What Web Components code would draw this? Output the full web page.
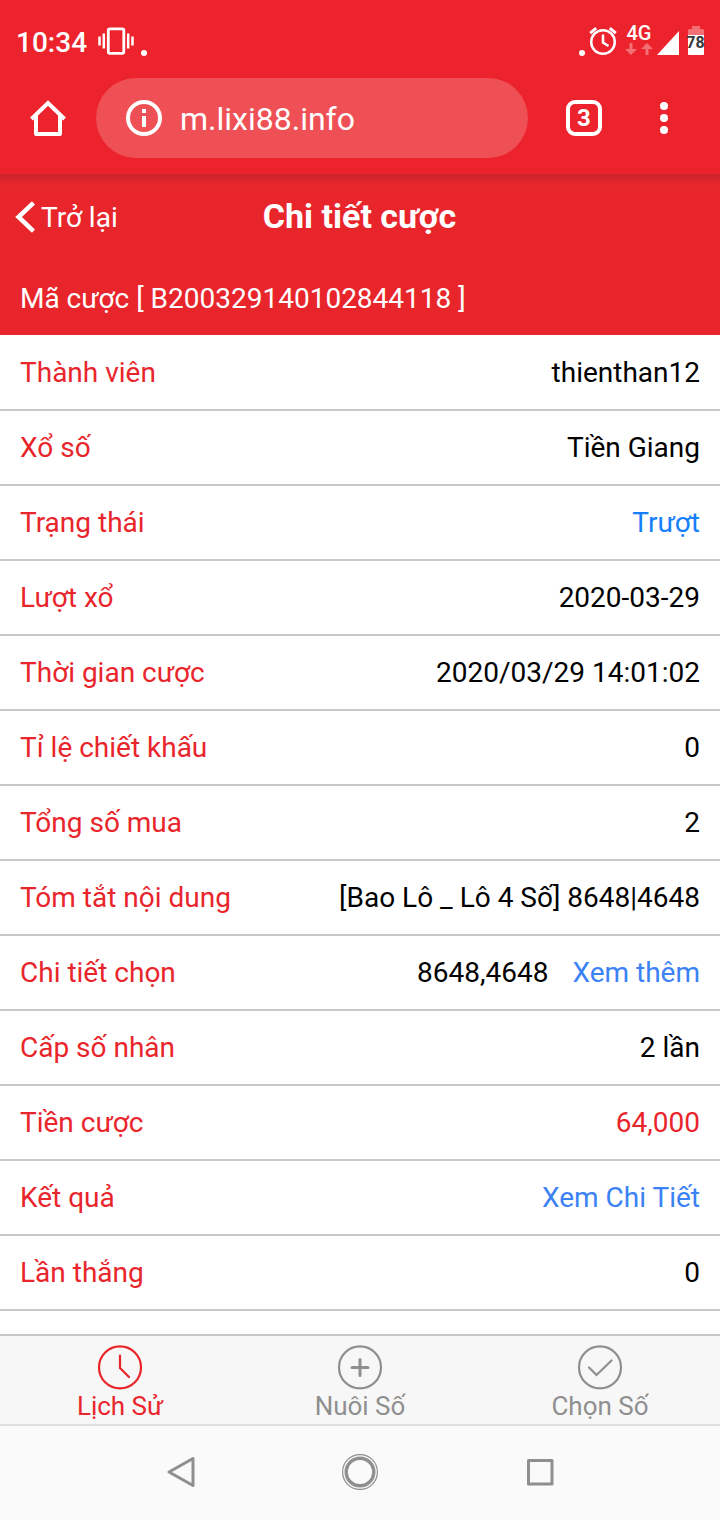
<!DOCTYPE html>
<html lang="vi">
<head>
<meta charset="utf-8">
<meta name="viewport" content="width=device-width, initial-scale=1">
<title>Chi tiết cược</title>
<style>
  html, body { margin: 0; height: 100%; }
  body { font-family: Roboto, "Noto Sans", sans-serif; font-size: 28px; line-height: 36px; background: #fff; color: #000;
    --chrome: #ec232c; --brand: #e9252c; --line: #c8c7cc; --muted: #8f8f8f; --link: #3b82f6; }
</style>
</head>
<body>
<phone-screen>
  <status-bar slot="top"></status-bar>
  <browser-bar slot="top" url="m.lixi88.info" tabs="3"></browser-bar>
  <page-header slot="top"><span slot="title">Chi tiết cược</span>Mã cược [ B200329140102844118 ]</page-header>
  <bet-details></bet-details>
  <tab-bar slot="bottom"></tab-bar>
  <system-nav slot="bottom"></system-nav>
</phone-screen>
<script>
const define = (name, markup, setup) => customElements.define(name, class extends HTMLElement {
  constructor() {
    super();
    const t = document.createElement('template');
    t.innerHTML = `<style>
      * { box-sizing: border-box; }
      button { appearance: none; border: 0; margin: 0; padding: 0; background: none; font: inherit; color: inherit; display: flex; align-items: center; justify-content: center; cursor: pointer; }
      a { text-decoration: none; color: inherit; }
      svg { display: block; flex: none; }
    </style>` + markup;
    this.attachShadow({ mode: 'open' }).append(t.content.cloneNode(true));
  }
  connectedCallback() { if (setup) setup(this, this.shadowRoot); }
});

define('phone-screen', `
<style>
  :host { display: flex; flex-direction: column; height: 100vh; }
  main { flex: 1; min-height: 0; overflow-y: auto; }
</style>
<slot name="top"></slot><main><slot></slot></main><slot name="bottom"></slot>`);

define('status-bar', `
<style>
  :host { display: flex; justify-content: space-between; padding: 24px 15px 18px 16px; background: var(--chrome); color: #fff; }
  div { display: flex; align-items: center; height: 36px; }
  .time { font-weight: 500; margin-right: 11px; line-height: 34px; padding-top: 2px; }
  .dot { align-self: flex-end; width: 6px; height: 6px; border-radius: 50%; background: #fff; margin: 0 4px 4px 7px; }
  .net { display: flex; flex-direction: column; align-items: center; height: 36px; margin: 0 4px 0 8px; font-size: 20px; line-height: 19px; font-weight: 500; }
  .battery { display: grid; place-items: center; margin-left: 7px; width: 19px; }
  .battery > * { grid-area: 1 / 1; }
  .battery span { font-size: 16px; line-height: 16px; font-weight: 700; color: #37383c; padding-top: 2px; }
</style>
<div>
  <span class="time">10:34</span>
  <svg width="36" height="36" viewBox="0 0 36 36" fill="none" stroke="#fff" aria-hidden="true">
    <rect x="10.3" y="4.8" width="15.5" height="24.5" rx="1.5" stroke-width="2.8"/>
    <path d="M1.500 12.500v9M34.500 12.500v9M5.800 9.500v15M30.200 9.500v15" stroke-width="2.500"/>
  </svg>
  <i class="dot"></i>
</div>
<div>
  <i class="dot"></i>
  <svg width="28" height="36" viewBox="0 0 28 36" fill="none" stroke="#fff" aria-hidden="true">
    <circle cx="14" cy="18" r="11.800" stroke-width="2.500"/>
    <path d="M1.200 9.200 7.200 4.200M26.800 9.200 20.800 4.200" stroke-width="3"/>
    <path d="M14 10.500V18.500L19.500 22" stroke-width="2.500"/>
  </svg>
  <span class="net">4G
    <svg width="28" height="12" viewBox="0 0 28 12" fill="#fff" fill-opacity=".35" aria-hidden="true">
      <path d="M4.500 0h3v6H12L6 12 0 6h4.500zM20.500 12h3V6H28L22 0 16 6h4.500z"/>
    </svg>
  </span>
  <svg width="22" height="36" viewBox="0 0 22 36" aria-hidden="true"><path d="M0 31 22 7V31z" fill="#fff"/></svg>
  <span class="battery">
    <svg width="16" height="36" viewBox="0 0 16 36" fill="#fff" aria-hidden="true">
      <path d="M0 11V6.500Q0 5 1.500 5H4V2h8v3h2.500Q16 5 16 6.500V11z" fill-opacity=".35"/>
      <path d="M0 11h16v19q0 1-1 1H1q-1 0-1-1z"/>
    </svg>
    <span>78</span>
  </span>
</div>`);

define('browser-bar', `
<style>
  :host { display: flex; align-items: center; padding: 0 16px 16px 0; background: var(--chrome); color: #fff; }
  .home { width: 96px; height: 80px; }
  .pill { flex: 1; min-width: 0; display: flex; align-items: center; gap: 18px; height: 80px; padding: 0 30px; margin-right: 16px; border-radius: 40px; background: #ef5056; }
  input { flex: 1; min-width: 0; border: 0; padding: 0; background: none; outline: 0; color: #fff; font: inherit; font-size: 32px; height: 44px; margin-top: 2px; }
  .act { width: 80px; height: 80px; }
  .count { width: 36px; height: 36px; border: 4px solid #fff; border-radius: 9px; font-size: 24px; line-height: 28px; font-weight: 700; text-align: center; }
</style>
<button class="home" aria-label="Trang chủ">
  <svg width="38" height="38" viewBox="0 0 38 38" fill="none" stroke="#fff" stroke-width="4" stroke-linejoin="round"><path d="M2.500 20 19 4 35.500 20" stroke-linejoin="miter"/><path d="M7 17V35H31V17"/></svg>
</button>
<div class="pill">
  <button aria-label="Thông tin trang">
    <svg width="36" height="36" viewBox="0 0 36 36"><circle cx="18" cy="18" r="16" fill="none" stroke="#fff" stroke-width="4"/><path d="M16 9h4v4h-4zM16 16h4v11h-4z" fill="#fff"/></svg>
  </button>
  <input type="text" aria-label="Địa chỉ trang">
</div>
<button class="act" aria-label="Các thẻ"><span class="count"></span></button>
<button class="act" aria-label="Menu">
  <svg width="8" height="32" viewBox="0 0 8 32" fill="#fff"><circle cx="4" cy="4" r="4"/><circle cx="4" cy="16" r="4"/><circle cx="4" cy="28" r="4"/></svg>
</button>`, (el, root) => {
  root.querySelector('input').value = el.getAttribute('url');
  root.querySelector('.count').textContent = el.getAttribute('tabs');
});

define('page-header', `
<style>
  :host { display: block; color: #fff; background: linear-gradient(#c9252b, #df262c 7px, var(--brand) 14px); }
  header { display: grid; grid-template-columns: 1fr auto 1fr; align-items: center; height: 86px; padding: 0 16px 0 15px; }
  a { display: flex; align-items: center; gap: 6px; }
  a span { padding-top: 2px; }
  h1 { margin: 0; font-size: 34px; line-height: 40px; font-weight: 700; padding-bottom: 2px; }
  p { margin: 0; padding: 21px 20px 18px; }
</style>
<header>
  <a href="#back"><svg width="20" height="32" viewBox="0 0 20 32" fill="none" stroke="#fff" stroke-width="4.500"><path d="M18.500 1.800 3.500 16 18.500 30.200"/></svg><span>Trở lại</span></a>
  <h1><slot name="title"></slot></h1>
</header>
<p><slot></slot></p>`);

define('bet-details', `
<style>
  :host { display: block; padding-top: 1px; }
  dl { margin: 0; }
  dl > div { display: flex; justify-content: space-between; gap: 24px; padding: 19px 20px 18px; border-bottom: 2px solid var(--line); }
  dt { color: var(--brand); }
  dd { margin: 0; display: flex; gap: 24px; text-align: right; }
  dd a { color: var(--link); }
  .status { color: #157efb; }
  .amount { color: var(--brand); }
</style>
<dl>
  <div><dt>Thành viên</dt><dd>thienthan12</dd></div>
  <div><dt>Xổ số</dt><dd>Tiền Giang</dd></div>
  <div><dt>Trạng thái</dt><dd class="status">Trượt</dd></div>
  <div><dt>Lượt xổ</dt><dd>2020-03-29</dd></div>
  <div><dt>Thời gian cược</dt><dd>2020/03/29 14:01:02</dd></div>
  <div><dt>Tỉ lệ chiết khấu</dt><dd>0</dd></div>
  <div><dt>Tổng số mua</dt><dd>2</dd></div>
  <div><dt>Tóm tắt nội dung</dt><dd>[Bao Lô _ Lô 4 Số] 8648|4648</dd></div>
  <div><dt>Chi tiết chọn</dt><dd><span>8648,4648</span><a href="#more">Xem thêm</a></dd></div>
  <div><dt>Cấp số nhân</dt><dd>2 lần</dd></div>
  <div><dt>Tiền cược</dt><dd class="amount">64,000</dd></div>
  <div><dt>Kết quả</dt><dd><a href="#result">Xem Chi Tiết</a></dd></div>
  <div><dt>Lần thắng</dt><dd>0</dd></div>
</dl>`);

define('tab-bar', `
<style>
  :host { display: block; background: #f7f7f7; border-top: 2px solid var(--line); color: var(--muted); }
  nav { display: grid; grid-template-columns: repeat(3, 1fr); }
  a { display: flex; flex-direction: column; align-items: center; padding-top: 9px; height: 88px; font-size: 26px; line-height: 34px; }
  a[aria-current] { color: var(--brand); }
  svg { fill: none; stroke: currentColor; stroke-width: 2.2; stroke-linecap: round; overflow: visible; }
</style>
<nav>
  <a href="#history" aria-current="page"><svg width="44" height="44" viewBox="0 0 44 44"><circle cx="22" cy="22.400" r="21"/><path d="M22 10.500V23L31 32"/></svg>Lịch Sử</a>
  <a href="#nurture"><svg width="44" height="44" viewBox="0 0 44 44"><circle cx="22" cy="22.400" r="21"/><path d="M22 14.400V30.400M14 22.400H30" stroke-width="3"/></svg>Nuôi Số</a>
  <a href="#pick"><svg width="44" height="44" viewBox="0 0 44 44"><circle cx="22" cy="22.400" r="21"/><path d="M11 22.500 18.500 30 33.500 15.500"/></svg>Chọn Số</a>
</nav>`);

define('system-nav', `
<style>
  :host { display: grid; grid-template-columns: repeat(3, 1fr); padding: 0 12.5% 2px; box-sizing: border-box; height: 96px; background: #fafafa; border-top: 2px solid #dfdfdf; }
  svg { fill: none; stroke: #8f8f8f; }
</style>
<button aria-label="Quay lại"><svg width="36" height="36" viewBox="0 0 36 36"><path d="M7 18 31 4.500V31.500z" stroke-width="3" stroke-linejoin="round"/></svg></button>
<button aria-label="Màn hình chính"><svg width="36" height="36" viewBox="0 0 36 36"><circle cx="18" cy="18" r="17.400" stroke-width="1.200"/><circle cx="18" cy="18" r="13.800" stroke-width="3.400"/></svg></button>
<button aria-label="Gần đây"><svg width="36" height="36" viewBox="0 0 36 36"><rect x="6.500" y="6.500" width="23.500" height="23.500" stroke-width="3" stroke-linejoin="round"/></svg></button>`);
</script>
</body>
</html>
